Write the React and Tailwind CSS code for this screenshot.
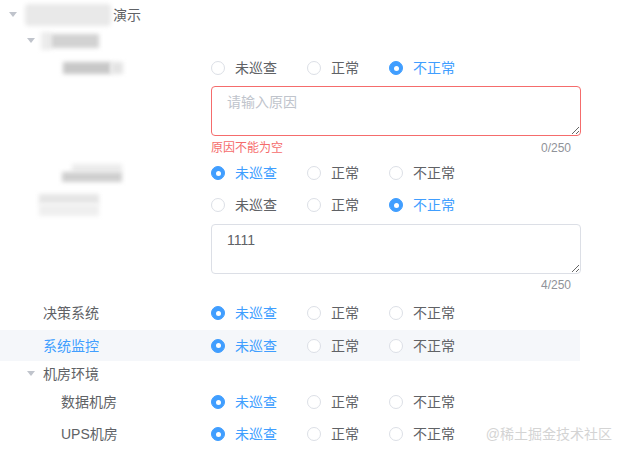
import React from "react";

const FONT = { fontFamily: '"Liberation Sans", "Noto Sans CJK SC", sans-serif' };

// 缩进: 每一级 18px
const indent = ["pl-[1px]", "pl-[19px]", "pl-[37px]"];

const Caret = ({ open }) => (
  <span className="w-[24px] h-full flex items-center justify-center shrink-0">
    {open && (
      <svg width="8" height="6" viewBox="0 0 8 6">
        <polygon points="0,0 8,0 4,5" fill="#c0c4cc" />
      </svg>
    )}
  </span>
);

const Radio = ({ checked, label }) => (
  <label className="flex items-center mr-[30px]">
    <span
      className={`w-[14px] h-[14px] rounded-full border flex items-center justify-center ${
        checked ? "bg-[#409eff] border-[#409eff]" : "bg-white border-[#dcdfe6]"
      }`}
    >
      {checked && <span className="w-[5px] h-[5px] rounded-full bg-white" />}
    </span>
    <span className={`pl-[10px] text-sm ${checked ? "text-[#409eff]" : "text-[#606266]"}`}>
      {label}
    </span>
  </label>
);

const Radios = ({ value }) => (
  <div className="flex items-center">
    {["未巡查", "正常", "不正常"].map((opt) => (
      <Radio key={opt} label={opt} checked={value === opt} />
    ))}
  </div>
);

const Row = ({ level, caret, label, value, h, active }) => (
  <div className={`flex items-center ${h} ${active ? "bg-[#f5f7fa]" : ""}`}>
    <div className={`w-[211px] shrink-0 flex items-center h-full ${indent[level]}`}>
      <Caret open={caret} />
      {label}
    </div>
    {value && <Radios value={value} />}
  </div>
);

const Blur = ({ className }) => <div className={`blur-[2px] ${className}`} />;

const Reason = ({ text, error }) => (
  <div className="ml-[211px] w-[370px]">
    <textarea
      readOnly
      value={text}
      placeholder="请输入原因"
      className={`block w-full h-[50px] rounded border px-[15px] py-[5px] text-sm leading-[1.5] text-[#606266] placeholder:text-[#c0c4cc] outline-none ${
        error ? "border-[#f56c6c]" : "border-[#dcdfe6]"
      }`}
    />
  </div>
);

const Count = ({ n, error, h }) => (
  <div className={`ml-[211px] w-[370px] flex items-center justify-between pr-[10px] text-xs ${h}`}>
    <span className="text-[#f56c6c]">{error}</span>
    <span className="text-[#909399]">{n}/250</span>
  </div>
);

const App = () => {
  return (
    <div className="relative w-[627px] h-[458px] bg-white overflow-hidden" style={FONT}>
      <div className="w-[580px]">
        <Row
          level={0}
          caret
          h="h-[30px]"
          label={
            <div className="flex items-center">
              <Blur className="w-[86px] h-[22px] bg-[#e9e9e9] rounded-sm" />
              <span className="text-sm text-[#606266] ml-[2px]">演示</span>
            </div>
          }
        />
        <Row
          level={1}
          caret
          h="h-[22px]"
          label={
            <div className="flex items-center -ml-[2px]">
              <Blur className="w-[10px] h-[18px] bg-[#ececec]" />
              <Blur className="w-[48px] h-[14px] bg-[#d2d2d2]" />
            </div>
          }
        />
        <Row
          level={2}
          h="h-[32px]"
          value="不正常"
          label={
            <div className="flex items-center ml-[2px]">
              <Blur className="w-[48px] h-[12px] bg-[#c8c8c8]" />
              <Blur className="w-[12px] h-[12px] bg-[#e4e4e4]" />
            </div>
          }
        />
        <div className="h-[2px]" />
        <Reason text="" error />
        <Count n={0} error="原因不能为空" h="h-[24px]" />
        <Row
          level={2}
          h="h-[26px]"
          value="未巡查"
          label={
            <div className="flex flex-col ml-[1px]">
              <Blur className="w-[50px] h-[8px] bg-[#ececec] ml-[10px]" />
              <Blur className="w-[60px] h-[10px] bg-[#cfcfcf]" />
            </div>
          }
        />
        <Row
          level={1}
          h="h-[38px]"
          value="不正常"
          label={
            <div className="flex flex-col -ml-[4px]">
              <Blur className="w-[60px] h-[10px] bg-[#e6e6e6]" />
              <Blur className="w-[60px] h-[12px] bg-[#efefef]" />
            </div>
          }
        />
        <Reason text="1111" />
        <Count n={4} h="h-[22px]" />
        <Row
          level={1}
          h="h-[34px]"
          value="未巡查"
          label={<span className="text-sm text-[#606266]">决策系统</span>}
        />
        <Row
          level={1}
          h="h-[31px]"
          active
          value="未巡查"
          label={<span className="text-sm text-[#409eff]">系统监控</span>}
        />
        <Row
          level={1}
          caret
          h="h-[26px]"
          label={<span className="text-sm text-[#606266]">机房环境</span>}
        />
        <Row
          level={2}
          h="h-[30px]"
          value="未巡查"
          label={<span className="text-sm text-[#606266]">数据机房</span>}
        />
        <Row
          level={2}
          h="h-[34px]"
          value="未巡查"
          label={<span className="text-sm text-[#606266]">UPS机房</span>}
        />
      </div>
      {/* 水印 */}
      <div className="absolute right-[15px] bottom-[14px] text-sm text-[#d4d4d4]">
        @稀土掘金技术社区
      </div>
    </div>
  );
};

export default App;
